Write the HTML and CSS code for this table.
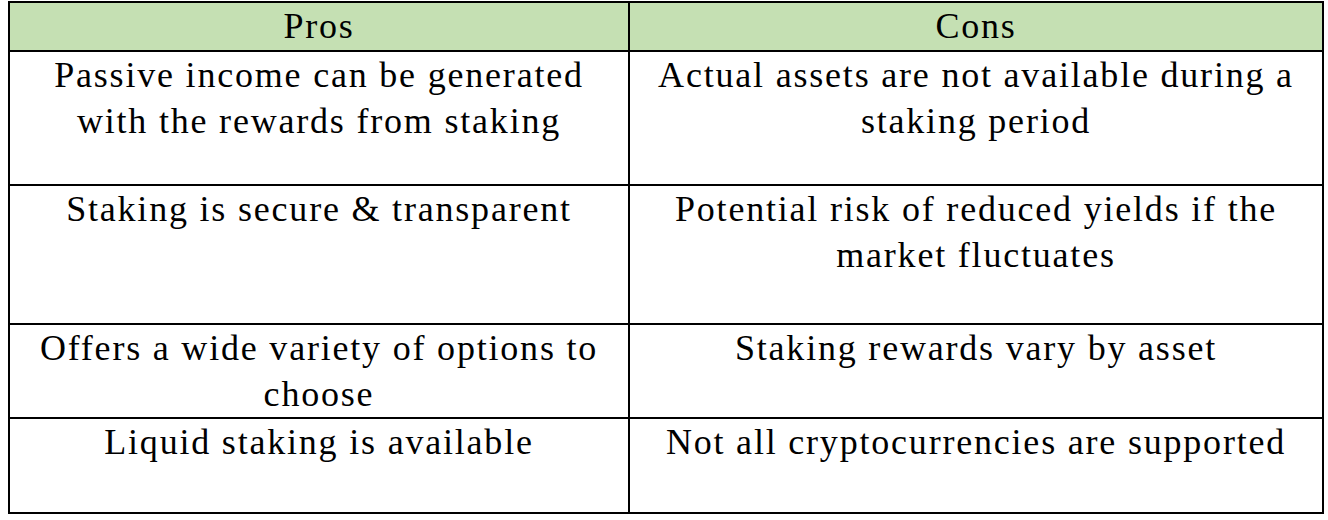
FILE: index.html
```html
<!DOCTYPE html>
<html lang="en">
<head>
<meta charset="utf-8">
<title>Staking Pros and Cons</title>
<link rel="stylesheet" href="styles.css">
</head>
<body>
<table class="pc-table">
  <colgroup>
    <col class="col-pros">
    <col class="col-cons">
  </colgroup>
  <thead>
    <tr class="row-head">
      <th>Pros</th>
      <th>Cons</th>
    </tr>
  </thead>
  <tbody>
    <tr class="row-1">
      <td>Passive income can be generated with the rewards from staking</td>
      <td>Actual assets are not available during a staking period</td>
    </tr>
    <tr class="row-2">
      <td>Staking is secure &amp; transparent</td>
      <td>Potential risk of reduced yields if the market fluctuates</td>
    </tr>
    <tr class="row-3">
      <td>Offers a wide variety of options to choose</td>
      <td>Staking rewards vary by asset</td>
    </tr>
    <tr class="row-4">
      <td>Liquid staking is available</td>
      <td>Not all cryptocurrencies are supported</td>
    </tr>
  </tbody>
</table>
</body>
</html>
```

FILE: styles.css
```css
html, body {
  margin: 0;
  padding: 0;
  background: #ffffff;
}

body {
  padding: 1px 0 0 8px;
}

.pc-table {
  border-collapse: collapse;
  table-layout: fixed;
  width: 1314px;
  font-family: "Liberation Serif", "Times New Roman", serif;
  font-size: 36px;
  line-height: 46px;
  letter-spacing: 1.8px;
  color: #000000;
}

.col-pros { width: 620px; }
.col-cons { width: 694px; }

.pc-table th,
.pc-table td {
  border: 2px solid #000000;
  padding: 0 26px;
  text-align: center;
  vertical-align: top;
  font-weight: normal;
}

.row-head th {
  background: #c5e0b3;
  height: 47px;
}

.row-1 td { height: 132px; }
.row-2 td { height: 137px; }
.row-3 td { height: 91px; }
.row-4 td { height: 93px; }
```
